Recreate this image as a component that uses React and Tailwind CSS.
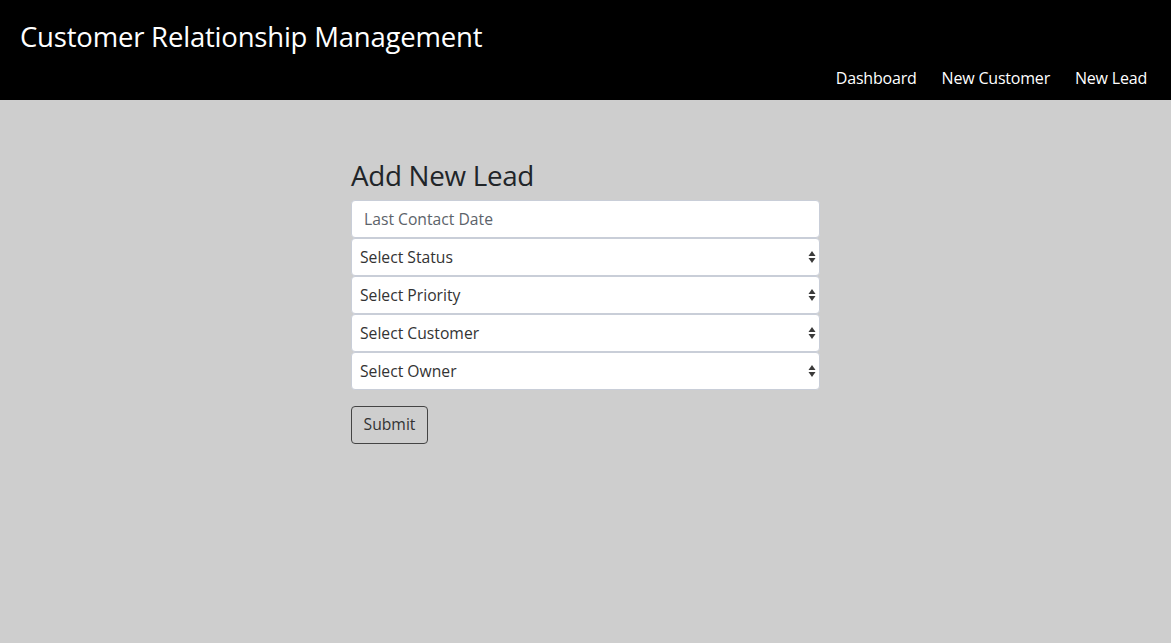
import React from 'react';

const fontStack = { fontFamily: '"Open Sans", "Noto Sans", sans-serif' };

const selects = ['Select Status', 'Select Priority', 'Select Customer', 'Select Owner'];

const Arrows = () => (
  <svg width="8" height="14" viewBox="0 0 8 14" className="absolute right-[3px] top-1/2 -translate-y-1/2">
    <path d="M4 1 L7.5 6 L0.5 6 Z" fill="#3a3a3a" />
    <path d="M4 13 L7.5 8 L0.5 8 Z" fill="#3a3a3a" />
  </svg>
);

const App = () => {
  return (
    <div className="min-h-[643px] bg-[#cecece]" style={fontStack}>
      <header className="h-[100px] bg-black text-white flex flex-col px-5">
        <h1 className="text-[27.5px] leading-none pt-[23px] tracking-[-0.2px]">
          Customer Relationship Management
        </h1>
        <nav className="flex justify-end gap-[25px] text-[16px] mt-[15px] pr-[4px] tracking-[-0.2px]">
          <a href="#">Dashboard</a>
          <a href="#">New Customer</a>
          <a href="#">New Lead</a>
        </nav>
      </header>

      <main className="w-[469px] mx-auto pt-[62px]">
        <h2 className="text-[27.8px] leading-none text-[#212529] mb-[10px] tracking-[-0.3px]">Add New Lead</h2>
        <form className="flex flex-col">
          <input
            type="text"
            placeholder="Last Contact Date"
            className="h-[38px] w-full bg-white border border-[#c9ced8] rounded-[4px] px-3 text-[15.7px] text-[#212529] placeholder:text-[#5c636a] outline-none"
          />
          {selects.map((label) => (
            <div key={label} className="relative h-[38px] w-full bg-white border border-[#c9ced8] rounded-[4px]">
              <div className="px-2 text-[15.7px] leading-[36px] text-[#333]">{label}</div>
              <Arrows />
            </div>
          ))}
          <div className="mt-[16px]">
            <button
              type="button"
              className="h-[38px] w-[77px] border border-[#444] rounded-[4px] text-[15.7px] text-[#333] bg-transparent"
            >
              Submit
            </button>
          </div>
        </form>
      </main>
    </div>
  );
};

export default App;
